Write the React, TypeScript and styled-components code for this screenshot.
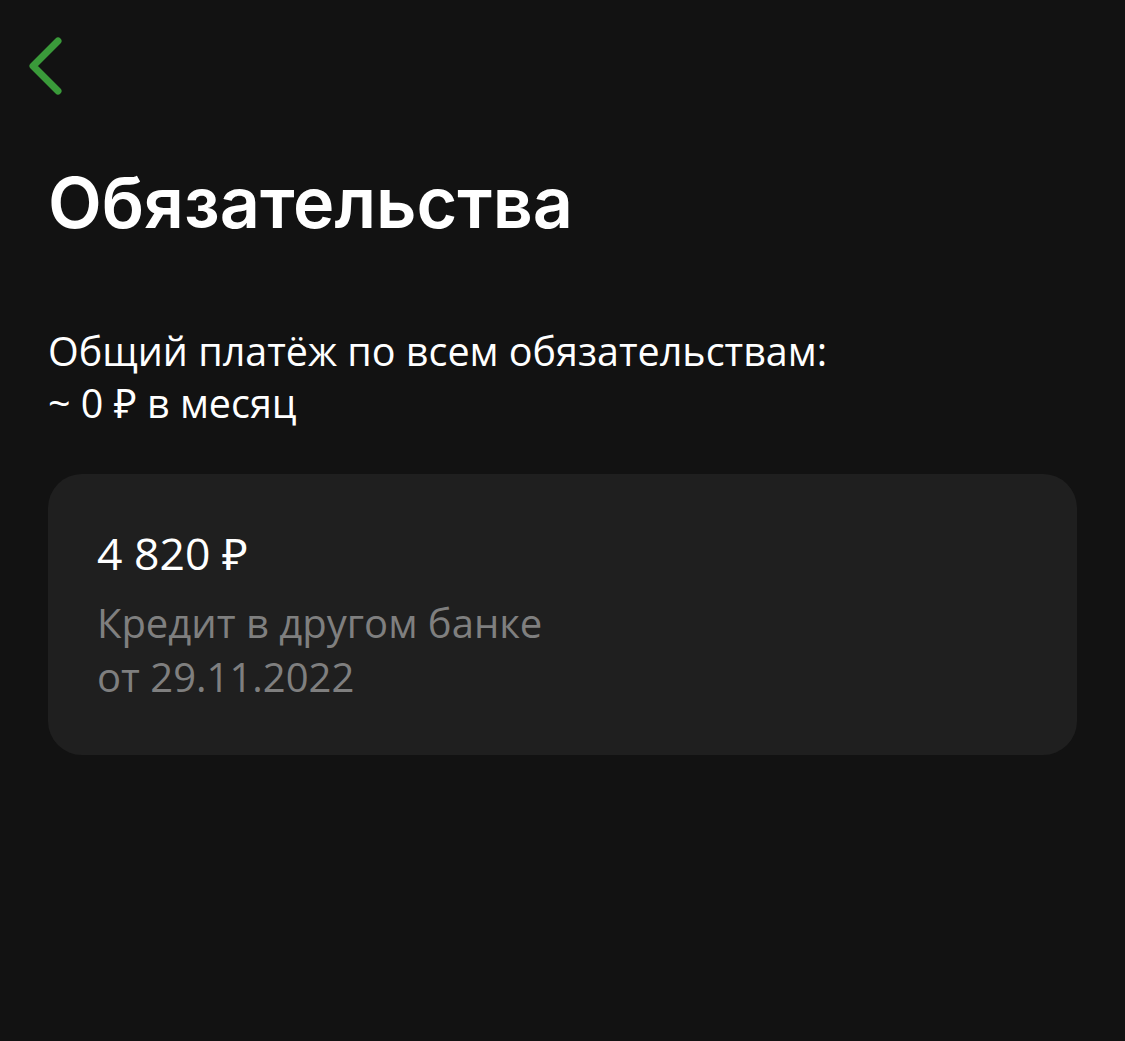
import React from 'react';
import styled, {createGlobalStyle} from 'styled-components';

const GlobalStyle = createGlobalStyle`
  html, body {
    margin: 0;
    padding: 0;
    background: #121212;
  }
  body {
    font-family: "Open Sans", "Noto Sans", sans-serif;
    color: #fff;
  }
`;

const Screen = styled.div`
  min-height: 1041px;
  background: #121212;
  display: flex;
  flex-direction: column;
  padding: 37px 48px 0 48px;
  box-sizing: border-box;
`;

const BackButton = styled.button`
  background: none;
  border: none;
  padding: 0;
  margin-left: -22px;
  width: 40px;
  height: 58px;
  display: flex;
  align-items: center;
  justify-content: center;
  cursor: pointer;
`;

const Title = styled.h1`
  font-family: Inter, "Noto Sans", sans-serif;
  font-weight: 600;
  font-size: 70px;
  line-height: 80px;
  margin: 68px 0 0 0;
`;

const Summary = styled.p`
  font-size: 39.5px;
  line-height: 52px;
  margin: 82px 0 0 0;
`;

const Card = styled.div`
  margin-top: 45px;
  background: #1f1f1f;
  border-radius: 34px;
  padding: 49px 49px 51px 49px;
  display: flex;
  flex-direction: column;
`;

const Amount = styled.div`
  font-size: 44.5px;
  line-height: 60px;
  margin-bottom: 13px;
`;

const Caption = styled.div`
  font-size: 40px;
  line-height: 54px;
  color: #7f7f7f;
`;

function ChevronLeft() {
  return (
    <svg width="40" height="58" viewBox="0 0 40 58">
      <path d="M32 4 L7 29 L32 54" fill="none" stroke="#3a9a3a" strokeWidth="7"
            strokeLinecap="round" strokeLinejoin="round"/>
    </svg>
  );
}

export default function App() {
  return (
    <>
      <GlobalStyle/>
      <Screen>
        <BackButton aria-label="Назад"><ChevronLeft/></BackButton>
        <Title>Обязательства</Title>
        <Summary>
          Общий платёж по всем обязательствам:<br/>
          ~ 0 ₽ в месяц
        </Summary>
        <Card>
          <Amount>4 820 ₽</Amount>
          <Caption>Кредит в другом банке</Caption>
          <Caption>от 29.11.2022</Caption>
        </Card>
      </Screen>
    </>
  );
}
